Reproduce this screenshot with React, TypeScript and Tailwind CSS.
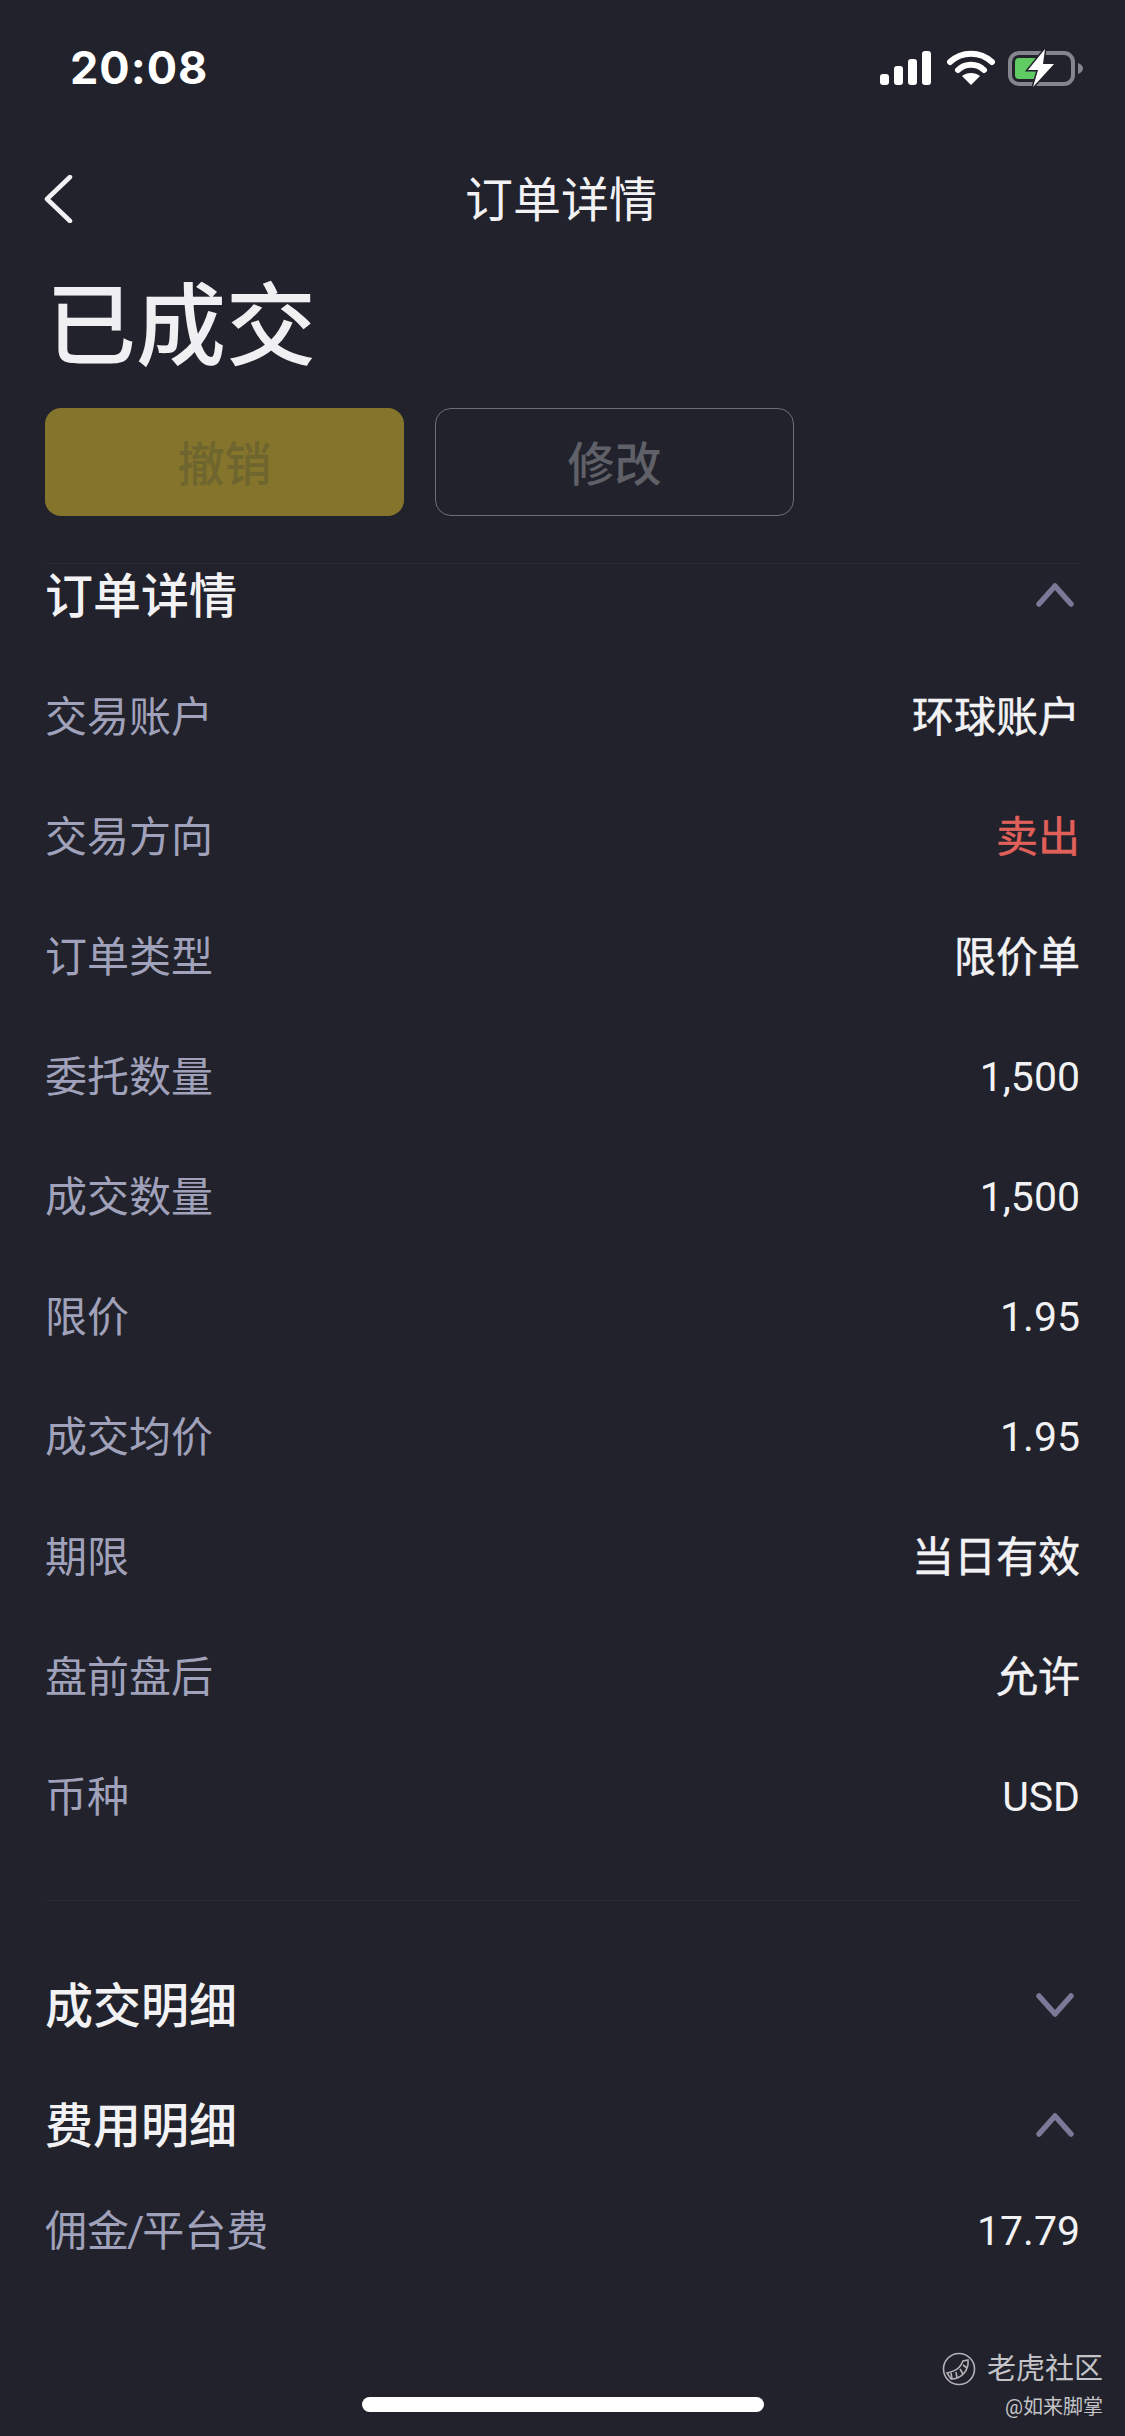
const cjk = "font-['Roboto','Noto_Sans_CJK_SC',sans-serif]";

const rows: { label: string; value: string; tone?: string; num?: boolean }[] = [
  { label: '交易账户', value: '环球账户' },
  { label: '交易方向', value: '卖出', tone: 'text-[#e0605a]' },
  { label: '订单类型', value: '限价单' },
  { label: '委托数量', value: '1,500', num: true },
  { label: '成交数量', value: '1,500', num: true },
  { label: '限价', value: '1.95', num: true },
  { label: '成交均价', value: '1.95', num: true },
  { label: '期限', value: '当日有效' },
  { label: '盘前盘后', value: '允许' },
  { label: '币种', value: 'USD', num: true },
];

function Chevron({ up }: { up?: boolean }) {
  return (
    <svg width="38" height="24" viewBox="0 0 38 24" fill="none" className="mr-[5px]">
      <path
        d={up ? 'M3 21 L19 3 L35 21' : 'M3 3 L19 21 L35 3'}
        stroke="#7a7a98"
        strokeWidth="5.5"
        strokeLinecap="round"
        strokeLinejoin="round"
      />
    </svg>
  );
}

function SectionHead({ title, up, className }: { title: string; up?: boolean; className: string }) {
  return (
    <div className={`flex items-center justify-between ${className}`}>
      <span className="-ml-[1px] pt-[3px] text-[48px] font-medium text-[#f2f2f5]">{title}</span>
      <Chevron up={up} />
    </div>
  );
}

function Row({ label, value, tone, num, className }: { label: string; value: string; tone?: string; num?: boolean; className?: string }) {
  const [before, after] = label.split('/');
  return (
    <div className={`flex items-center justify-between pt-[3px] ${className ?? 'h-[120px]'}`}>
      <span className="-ml-[1px] text-[42px] text-[#a0a1ba]">
        {after ? (
          <>
            {before}
            <span className="-mx-[2px]">/</span>
            {after}
          </>
        ) : (
          label
        )}
      </span>
      <span
        className={`-mr-[1px] ${tone ?? 'text-[#f2f2f5]'} ${num ? 'text-[41px]' : 'text-[42px] [-webkit-text-stroke:0.5px_currentColor]'}`}
      >
        {value}
      </span>
    </div>
  );
}

function StatusIcons() {
  return (
    <div className="flex items-center mr-[41px]">
      <svg width="52" height="34" viewBox="0 0 52 34" fill="#fff">
        <rect x="0" y="23" width="9" height="11" rx="3" />
        <rect x="14" y="15" width="9" height="19" rx="3" />
        <rect x="28" y="8" width="9" height="26" rx="3" />
        <rect x="42" y="0" width="9" height="34" rx="3" />
      </svg>
      <svg width="48" height="36" viewBox="0 0 48 36" fill="none" className="ml-[15px]">
        <path d="M3 12 C15 1 33 1 45 12" stroke="#fff" strokeWidth="6" strokeLinecap="round" />
        <path d="M11 20 C18 13 30 13 37 20" stroke="#fff" strokeWidth="6" strokeLinecap="round" />
        <path d="M24 35 L15 26 C20 22 28 22 33 26 Z" fill="#fff" />
      </svg>
      <svg width="76" height="38" viewBox="0 0 76 38" fill="none" className="ml-[13px]">
        <rect x="2" y="4" width="63" height="31" rx="9" stroke="#85858d" strokeWidth="4" />
        <rect x="7" y="9" width="24" height="21" rx="4" fill="#5fcb62" />
        <path d="M70 14 C73 15 75 17 75 19.5 C75 22 73 24 70 25 Z" fill="#85858d" />
        <path
          d="M37 0 L20 21 L30 21 L25 38 L46 15 L35 15 Z"
          fill="#fff"
          stroke="#21222b"
          strokeWidth="3"
          paintOrder="stroke"
        />
      </svg>
    </div>
  );
}

function TigerLogo() {
  return (
    <svg width="34" height="34" viewBox="0 0 34 34" fill="none" stroke="#b4b4b8" strokeWidth="1.6">
      <circle cx="17" cy="17" r="15.5" />
      <path d="M5 21 C9 20 17 19 21 9 L26 8 C27 18 20 27 9 27 Z" />
      <path d="M9 21 L10 27 M14 20 L15 26 M18 17 L21 22 M21 13 L25 16" />
    </svg>
  );
}

export default function App() {
  return (
    <div className={`relative w-[1125px] h-[2436px] overflow-hidden bg-[#21222b] ${cjk}`}>
      <div className="flex items-center justify-between h-[136px]">
        <span className="ml-[70px] text-[45px] font-bold tracking-[1px] text-white font-['Inter',sans-serif]">20:08</span>
        <StatusIcons />
      </div>

      <div className="flex items-center justify-center relative h-[126px]">
        <svg width="30" height="48" viewBox="0 0 30 48" fill="none" className="absolute left-[43px] top-[39px]">
          <path d="M27 2 L4 24 L27 46" stroke="#f2f2f5" strokeWidth="4.5" strokeLinecap="round" strokeLinejoin="round" />
        </svg>
        <span className="pt-[3px] pr-[3px] text-[48px] text-[#f2f2f5]">订单详情</span>
      </div>

      <div className="px-[46px]">
        <div className="flex items-center h-[130px] text-[90px] font-medium text-[#f0f0f3]">已成交</div>

        <div className="flex gap-[31px] mt-[16px] -ml-[1px]">
          <div className="flex items-center justify-center pt-[6px] w-[359px] h-[108px] rounded-[16px] bg-[#85742b] text-[47px] font-medium text-[#6f652f]">
            撤销
          </div>
          <div className="flex items-center justify-center pt-[6px] w-[359px] h-[108px] rounded-[16px] border border-[#6e6f7b] text-[47px] font-medium text-[#5f6068]">
            修改
          </div>
        </div>

        <div className="mt-[47px] h-px bg-[#2b2c37]" />
        <SectionHead title="订单详情" up className="h-[62px] mb-[30px]" />

        {rows.map((r) => (
          <Row key={r.label} {...r} />
        ))}

        <div className="mt-[44px] h-px bg-[#2b2c37]" />
        <div className="mt-[44px]">
          <SectionHead title="成交明细" className="h-[120px]" />
          <SectionHead title="费用明细" up className="h-[120px]" />
        </div>
        <Row label="佣金/平台费" value="17.79" num className="h-[90px]" />
      </div>

      <div className="absolute right-[22px] top-[2350px] flex flex-col items-end">
        <div className="flex items-center gap-[11px]">
          <TigerLogo />
          <span className="text-[29px] leading-[38px] text-[#c4c4c8]">老虎社区</span>
        </div>
        <span className="mt-[6px] text-[20px] leading-[26px] text-[#c4c4c8]">@如来脚掌</span>
      </div>

      <div className="absolute left-[362px] top-[2397px] w-[402px] h-[15px] rounded-full bg-white" />
    </div>
  );
}
